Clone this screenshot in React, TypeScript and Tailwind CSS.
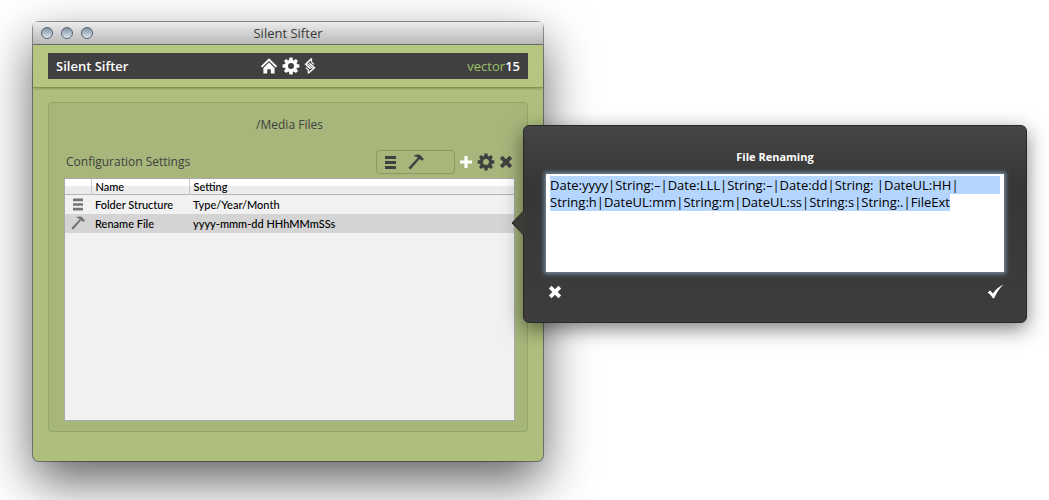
import { useEffect, useRef, useState } from "react";
import clsx from "clsx";

const pattern =
  "Date:yyyy|String:–|Date:LLL|String:–|Date:dd|String: |DateUL:HH|\nString:h|DateUL:mm|String:m|DateUL:ss|String:s|String:.|FileExt";

const HomeIcon = () => (
  <svg width="18" height="16" viewBox="0 0 18 16" fill="currentColor" aria-hidden="true">
    <path d="M9 0.2 17.2 8.2 15.8 9.6 9 3 2.2 9.6 0.8 8.2Z" />
    <path d="M9 4.6 14.6 10V15.6H10.8V11.2H7.2V15.6H3.4V10Z" />
  </svg>
);

const GearIcon = () => (
  <svg width="18" height="18" viewBox="-9 -9 18 18" fill="currentColor" aria-hidden="true">
    <path
      fillRule="evenodd"
      d="M0-6.2A6.2 6.2 0 1 1 0 6.2 6.2 6.2 0 1 1 0-6.2ZM0-3A3 3 0 1 0 0 3 3 3 0 1 0 0-3Z"
    />
    {[0, 45, 90, 135, 180, 225, 270, 315].map((a) => (
      <path key={a} transform={`rotate(${a})`} d="M-2-5.4-1.5-8.4H1.5L2-5.4Z" />
    ))}
  </svg>
);

const SiftIcon = () => (
  <svg width="12" height="18" viewBox="0 0 12 18" fill="none" stroke="currentColor" aria-hidden="true">
    <path strokeWidth="1.5" d="M7.6 1.6 1.6 7.2 6.4 11.6M5.4 6.2 10.4 10.8 4.2 16.2" />
    <path strokeWidth="1.1" d="M3.4 6.6 8.6 11.4M7.4 5 10 7.4M1.8 10.6 4.8 13.4M7.6 1.6V4.8M4.2 16.2V13" />
  </svg>
);

const ListIcon = ({ size = 11 }: { size?: number }) => (
  <svg width={size} height="13" viewBox="0 0 11 13" fill="currentColor" aria-hidden="true">
    <path d="M0 0H11V3H0ZM0 5H11V8H0ZM0 10H11V13H0Z" />
  </svg>
);

const HammerIcon = ({ size = 16 }: { size?: number }) => (
  <svg width={size} height={size} viewBox="0 0 16 16" fill="currentColor" aria-hidden="true">
    <path d="M6.4 1.2C9 0 11.8 0.4 13.6 2.2L14.2 3.4 16 4.8 14.2 6.8 12.4 5.4 11.4 5.2 2.4 15.6 0.4 13.8 9.6 4C9.2 2.8 8 2.4 6.4 2.4Z" />
  </svg>
);

const PlusIcon = () => (
  <svg width="14" height="14" viewBox="0 0 14 14" fill="currentColor" aria-hidden="true">
    <path d="M5.4 1H8.6V5.4H13V8.6H8.6V13H5.4V8.6H1V5.4H5.4Z" />
  </svg>
);

const CrossIcon = () => (
  <svg width="14" height="14" viewBox="0 0 14 14" fill="none" stroke="currentColor" aria-hidden="true">
    <path strokeWidth="3.8" d="M2.2 2.2 11.8 11.8M11.8 2.2 2.2 11.8" />
  </svg>
);

const CheckIcon = () => (
  <svg width="17" height="15" viewBox="0 0 17 15" fill="currentColor" aria-hidden="true">
    <path d="M0.6 8.4 3 6.6 6 9.4C8.8 5.6 12 2.6 16.4 0.6 12.4 4.4 9.6 8.8 7.2 14.2H5.8C4.6 11.8 2.8 9.8 0.6 8.4Z" />
  </svg>
);

const TitleBar = () => (
  <div className="relative flex h-[23px] items-center justify-center rounded-t-sm border-b border-[#686868] bg-linear-to-b from-[#ececec] to-[#b9b9b9] pt-0.5">
    <div className="absolute top-[5px] left-2 flex gap-2">
      {["Close", "Minimize", "Zoom"].map((label) => (
        <button
          key={label}
          aria-label={label}
          className="size-3 rounded-full border border-[#596473] bg-linear-to-b from-[#8393a3] to-[#dde8ef]"
        />
      ))}
    </div>
    <h1 className="text-[13px] text-[#383838]">Silent Sifter</h1>
  </div>
);

const Toolbar = () => (
  <header className="border-b border-[#83935a] bg-[#b4c680] px-[15px] py-2 shadow-[0_1px_2px_rgba(60,70,30,0.3)]">
    <div className="grid h-[26px] grid-cols-3 items-center bg-[#404040] px-2 text-[13px] font-semibold text-white">
      <span className="pt-0.5">Silent Sifter</span>
      <nav className="flex items-center justify-center gap-1">
        <button aria-label="Home"><HomeIcon /></button>
        <button aria-label="Settings"><GearIcon /></button>
        <button aria-label="Sift"><SiftIcon /></button>
      </nav>
      <span className="pt-0.5 text-right">
        <span className="font-medium text-[#9cc069]">vector</span>15
      </span>
    </div>
  </header>
);

const SettingsTable = () => (
  <div className="min-h-[243px] border border-[#a9a9b0] bg-[#f1f1f1]">
    <table className="w-full table-fixed text-left font-['Lato',sans-serif] text-[11px] leading-[15px] font-medium text-black">
      <thead>
        <tr className="border-b border-[#b4b4b4] bg-linear-to-b from-white from-50% to-[#ececec] to-50%">
          <th className="w-[26px]" aria-label="Type" />
          <th className="w-[98px] border-l border-[#c8c8c8] pl-1 font-medium">Name</th>
          <th className="border-l border-[#c8c8c8] pl-1 font-medium">Setting</th>
        </tr>
      </thead>
      <tbody>
        <tr className="h-[19px]">
          <td className="text-[#757575]">
            <div className="flex justify-center"><ListIcon size={10} /></div>
          </td>
          <td className="pl-1">Folder Structure</td>
          <td className="pl-1">Type/Year/Month</td>
        </tr>
        <tr className="h-[19px] bg-[#d4d4d4]">
          <td className="text-[#757575]">
            <div className="flex justify-center"><HammerIcon size={14} /></div>
          </td>
          <td className="pl-1">Rename File</td>
          <td className="pl-1">yyyy-mmm-dd HHhMMmSSs</td>
        </tr>
      </tbody>
    </table>
  </div>
);

const RenamePopover = () => {
  const field = useRef<HTMLTextAreaElement>(null);
  const [allSelected, setAllSelected] = useState(true);

  useEffect(() => {
    field.current?.focus();
    field.current?.select();
  }, []);

  return (
    <section className="relative z-10 mt-[103px] -ml-5 min-w-0 flex-[1_1_504px] self-start rounded-md border border-[#292929] bg-linear-to-b from-[#454545] via-[#363636] via-30% to-[#3d3d3d] px-[22px] pt-[22px] pb-[23px] shadow-[0_6px_20px_rgba(0,0,0,0.5)]">
      <svg className="absolute top-[84px] -left-[13px] text-[#3b3b38]" width="14" height="26" viewBox="0 0 14 26" aria-hidden="true">
        <path fill="currentColor" d="M14 0 1 13 14 26Z" />
        <path fill="none" stroke="#20221c" d="M12.5 1 1 13 12.5 25" />
      </svg>
      <label htmlFor="pattern" className="block text-center text-[11px] leading-[18px] font-bold text-white">
        File Renaming
      </label>
      {/* a full selection is tinted to the end of the first line */}
      <textarea
        ref={field}
        id="pattern"
        spellCheck={false}
        defaultValue={pattern}
        onMouseDown={() => setAllSelected(false)}
        onKeyDown={() => setAllSelected(false)}
        className={clsx(
          "mt-2 block h-[98px] w-full resize-none bg-white px-1 py-[3px] text-[13px] leading-[17px] text-black shadow-[0_0_4px_2px_#72879a] outline-none selection:bg-[#b4d5fe]",
          allSelected &&
            "bg-[linear-gradient(#b4d5fe,#b4d5fe)] bg-[length:calc(100%-8px)_18px] bg-[position:4px_2px] bg-no-repeat"
        )}
      />
      <div className="mt-3 flex items-center justify-between pl-0.5 text-white">
        <button aria-label="Cancel"><CrossIcon /></button>
        <button aria-label="Apply"><CheckIcon /></button>
      </div>
    </section>
  );
};

const App = () => {
  return (
    <main className="flex min-h-screen items-start overflow-hidden bg-white pt-[22px] pr-[22px] pl-[33px] font-['Open_Sans',sans-serif]">
      <div className="min-w-0 flex-[1_1_510px] rounded-md bg-[#aebf7d] shadow-[0_20px_50px_rgba(0,0,0,0.62),0_0_0_1px_rgba(0,0,0,0.4)]">
        <TitleBar />
        <Toolbar />
        <div className="px-[15px] pt-3.5 pb-[29px]">
          <div className="rounded-sm border border-[#94a568] bg-[#a7b77b] pt-3 pr-3 pb-2.5 pl-[15px]">
            <p className="text-center text-xs leading-5 text-[#404040]">/Media Files</p>
            <div className="mt-[15px] mb-1 flex h-6 items-center pr-0.5 text-[#404040]">
              <h2 className="grow pl-0.5 text-xs">Configuration Settings</h2>
              <div className="mr-1 flex h-6 w-[79px] items-center gap-3 rounded-sm border border-[#8b9a64] pl-2">
                <button aria-label="Folder structure"><ListIcon /></button>
                <button aria-label="Rename file"><HammerIcon /></button>
              </div>
              <div className="flex items-center gap-1">
                <button aria-label="Add" className="text-white"><PlusIcon /></button>
                <button aria-label="Edit"><GearIcon /></button>
                <button aria-label="Remove"><CrossIcon /></button>
              </div>
            </div>
            <SettingsTable />
          </div>
        </div>
      </div>
      <RenamePopover />
    </main>
  );
};

export default App;
